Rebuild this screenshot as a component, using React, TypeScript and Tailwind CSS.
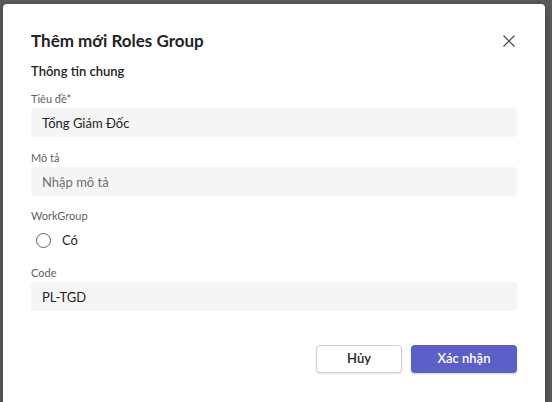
type FieldProps = {
  label: string
  value: string
  placeholder?: boolean
  className?: string
}

const Field = ({ label, value, placeholder, className }: FieldProps) => (
  <div className={className}>
    <div className="text-[11px] leading-[16px] text-[#616161]">{label}</div>
    <div className="mt-[1px] h-[29px] rounded-[4px] bg-[#f5f5f5] px-[11px] flex items-center">
      <span
        className={
          placeholder
            ? 'text-[13px] leading-[20px] text-[#6e6e6e]'
            : 'text-[13px] leading-[20px] text-[#242424]'
        }
      >
        {value}
      </span>
    </div>
  </div>
)

const CloseIcon = () => (
  <svg width="12" height="12" viewBox="0 0 12 12" className="text-[#424242]">
    <path d="M0.5 0.5 L11.5 11.5 M11.5 0.5 L0.5 11.5" stroke="currentColor" strokeWidth="1.1" fill="none" />
  </svg>
)

export default function App() {
  return (
    <div
      className="w-[552px] h-[402px] overflow-hidden bg-[#5c5c5c] pl-[3px] pt-[4px]"
      style={{ fontFamily: 'Lato, "Noto Sans", sans-serif' }}
    >
      <div className="w-[542px] h-[420px] rounded-[4px] bg-white shadow-[0_2px_8px_rgba(0,0,0,0.35)] pl-[28px] pr-[28px] pt-[24px]">
        <div className="flex items-center justify-between">
          <h1 className="text-[17px] leading-[26px] font-bold text-[#242424]">Thêm mới Roles Group</h1>
          <span className="mr-[2px] flex">
            <CloseIcon />
          </span>
        </div>

        <div className="mt-[7px] text-[13px] leading-[20px] font-semibold text-[#242424]">
          Thông tin chung
        </div>

        <Field className="mt-[10px]" label="Tiêu đề*" value="Tổng Giám Đốc" />
        <Field className="mt-[13px]" label="Mô tả" value="Nhập mô tả" placeholder />

        <div className="mt-[12px] text-[11px] leading-[16px] text-[#616161]">WorkGroup</div>
        <div className="h-[32px] flex items-center pl-[5px]">
          <span className="w-[15px] h-[15px] rounded-full border border-[#616161]" />
          <span className="ml-[11px] text-[13px] leading-[20px] text-[#242424]">Có</span>
        </div>

        <Field className="mt-[9px]" label="Code" value="PL-TGD" />

        <div className="mt-[34px] flex justify-end gap-[9px]">
          <button className="w-[86px] h-[28px] rounded-[4px] border border-[#d1d1d1] bg-white shadow-[0_1px_2px_rgba(0,0,0,0.12)] text-[13px] font-semibold text-[#242424]">
            Hủy
          </button>
          <button className="w-[106px] h-[28px] rounded-[4px] bg-[#5b5fc7] shadow-[0_1px_2px_rgba(0,0,0,0.2)] text-[13px] font-semibold text-white">
            Xác nhận
          </button>
        </div>
      </div>
    </div>
  )
}
